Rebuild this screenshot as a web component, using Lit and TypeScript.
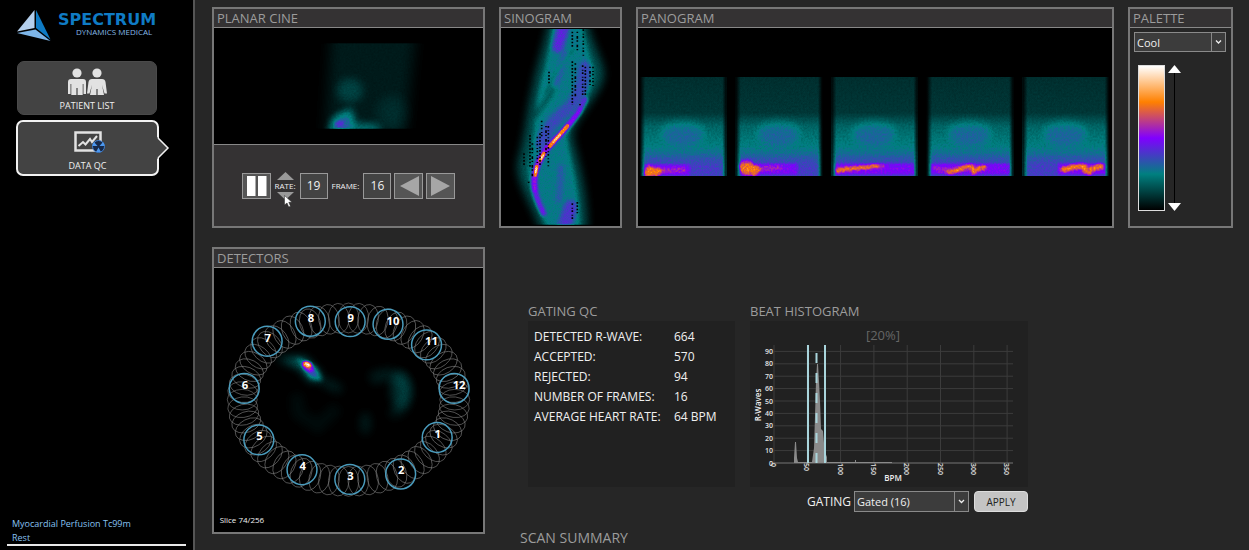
import { LitElement, html, css, svg } from "lit";
import { customElement } from "lit/decorators.js";

const VALUES = [
  ["DETECTED R-WAVE:", "664"],
  ["ACCEPTED:", "570"],
  ["REJECTED:", "94"],
  ["NUMBER OF FRAMES:", "16"],
  ["AVERAGE HEART RATE:", "64 BPM"],
];

// Detector head centres: x, y, label
const DETECTORS: [number, number, string][] = [
  [699, 593, "1"], [589, 703, "2"], [436, 719, "3"], [292, 690, "4"],
  [162, 600, "5"], [118, 445, "6"], [187, 303, "7"], [317, 243, "8"],
  [437, 244, "9"], [551, 252, "10"], [667, 314, "11"], [750, 445, "12"],
];

// Hot rows of each panogram projection: broad band, warm line, hottest line
const HOT: { band: string; warm: string; core: string; w: number }[] = [
  { band: "M3 93H50", warm: "M5 94L46 93", core: "M5 95l2 2l2-4l2 4l2-3l3 3l2-3l3 2", w: 6 },
  { band: "M3 92H62", warm: "M5 91L24 92L46 90", core: "M5 92l2-3l2 4l2-4l2 4l2-4l2 3l2 4l2-3l2 2", w: 7 },
  { band: "M3 92H84", warm: "M5 93L24 91L54 89", core: "M5 92l2 3l2-3l3 2l3-3l3 2l4-2l4 1l4-2l5 1l6-2l7 0", w: 3 },
  { band: "M3 92H84", warm: "M5 91L20 93L60 91", core: "M20 95l4 1l4-2l4-1l4-2l5-2l4 0l2 7l3-3l4-2l5-1", w: 4 },
  { band: "M36 92H84", warm: "M36 93L60 90L82 91", core: "M40 93l5-1l5-2l6-1l6 0l1 5l4 2l3-4l4-1l3-2l4 1", w: 5 },
];

// Sinogram dropout columns: x, top, bottom
const DROPS = [
  [247, 95, 140], [262, 95, 160], [280, 88, 170], [247, 184, 315], [256, 190, 290],
  [278, 196, 285], [286, 200, 285], [300, 200, 255], [309, 200, 260], [177, 215, 250],
  [270, 312, 325], [155, 362, 410], [120, 405, 500], [127, 430, 530], [142, 410, 490],
  [150, 400, 500], [168, 378, 470], [175, 378, 500], [102, 460, 500], [116, 545, 556],
  [247, 610, 665], [262, 606, 640],
];

@customElement("app-root")
export class AppRoot extends LitElement {
  static styles = css`
    :host { display: block; font-family: "Open Sans", "Noto Sans", sans-serif; font-size: 12px; color: #f0f0f0; }
    * { box-sizing: border-box; }
    button, input, select { font: inherit; color: inherit; margin: 0; padding: 0; }
    svg { display: block; }
    h2 { margin: 0; font-weight: 400; color: #9c9c9c; font-size: 13px; line-height: 18px; }
    .page { display: grid; grid-template-columns: 195px minmax(0, 1fr); height: 100vh; overflow: hidden; background: #262626; }
    .side { background: #000; border-right: 2px solid #555; padding: 8px 7px 4px; display: flex; flex-direction: column; }
    .brand { width: 172px; margin: 0 0 17px 5px; }
    .nav { display: flex; flex-direction: column; gap: 5px; padding-left: 10px; }
    .tab { display: flex; flex-direction: column; align-items: center; justify-content: flex-end; gap: 4px; height: 54px; border: 1px solid #4a4a4a; border-radius: 7px; background: #434343; font-size: 9px; line-height: 12px; padding-bottom: 2px; position: relative; width: 140px; }
    .tab.on { width: 143px; height: 56px; border: 2px solid #f2f2f2; margin-left: -1px; }
    .notch { position: absolute; left: 139px; top: 15px; }
    .study { margin-top: auto; color: #86c1f0; font-size: 9px; line-height: 12px; border-bottom: 2px solid #e8e8e8; padding-left: 5px; display: grid; gap: 2px; }
    .study p { margin: 0; }
    .main { padding: 7px 16px 0 17px; display: flex; flex-direction: column; gap: 20px; overflow: hidden; }
    .top { display: grid; grid-template-columns: 273px 123px minmax(0, 1fr) 105px; gap: 14px; height: 220px; flex: none; }
    .panel { border: 2px solid #777; display: flex; flex-direction: column; min-width: 0; }
    .panel h2 { background: #343233; border-bottom: 1px solid #888; padding-left: 3px; height: 19px; flex: none; }
    .view { background: #000; flex: 1; min-height: 0; }
    .view svg { width: 100%; height: 100%; }
    .controls { height: 82px; background: #343233; border-top: 1px solid #888; display: flex; align-items: center; justify-content: center; position: relative; font-size: 8px; }
    .key { width: 29px; height: 26px; border: 1px solid #999; background: #555; display: grid; place-items: center; }
    .rate { display: flex; flex-direction: column; align-items: center; margin: 0 4px; line-height: 12px; }
    .step { border: 0; background: none; display: block; }
    .num { width: 28px; height: 26px; border: 1px solid #999; background: #434343; text-align: center; font-size: 12px; }
    .frame { margin: 0 4px; }
    .gap { margin-left: 3px; }
    .cursor { position: absolute; left: 70px; top: 50px; }
    .tint { padding: 4px; flex: 1; }
    .pick { position: relative; height: 20px; display: flex; }
    .tint .pick { width: 92px; }
    .pick select { appearance: none; width: 100%; border: 1px solid #8a8a8a; border-radius: 0; background: #3c3c3c; padding-left: 2px; font-size: 11px; }
    .pick svg { position: absolute; right: 0; top: 0; pointer-events: none; }
    .scale { display: grid; grid-template-columns: 27px 13px; gap: 3px; padding: 13px 0 0 4px; }
    .ramp { height: 146px; border: 1px solid #ddd; background: linear-gradient(#fff, #ff8000 25%, #8000ff 50%, #008080 75%, #000); }
    .levels { display: grid; background: linear-gradient(#000, #000) center / 1px 100% no-repeat; }
    .levels input { grid-area: 1 / 1; appearance: none; background: none; writing-mode: vertical-lr; direction: rtl; width: 13px; height: 146px; pointer-events: none; }
    .levels input::-webkit-slider-thumb { appearance: none; pointer-events: auto; width: 13px; height: 8px; background: #fff; clip-path: polygon(50% 0, 100% 100%, 0 100%); }
    .levels .low::-webkit-slider-thumb { clip-path: polygon(0 0, 100% 0, 50% 100%); }
    .lower { display: grid; grid-template-columns: 273px 207px 278px; column-gap: 0; flex: none; }
    .detectors { height: 287px; }
    .gating { margin: 55px 0 0 43px; width: 207px; }
    .beat { margin: 55px 0 0 58px; width: 278px; }
    .card { background: #212121; margin-top: 1px; height: 166px; }
    .stats { border-collapse: collapse; }
    .stats th, .stats td { font-weight: 400; text-align: left; padding: 0; height: 20px; line-height: 20px; white-space: nowrap; }
    .stats th { width: 140px; }
    .statbox { padding: 6px 0 0 6px; }
    .apply { display: flex; align-items: center; justify-content: flex-end; gap: 3px; margin-top: 4px; font-size: 12px; }
    .apply .pick { width: 115px; height: 21px; }
    .go { width: 54px; height: 21px; border: 1px solid #ddd; border-radius: 4px; background: #c4c4c4; color: #222; font-size: 10px; margin-left: 2px; }
    .foot { padding-left: 308px; margin-top: -25px; font-size: 14px; }
  `;

  arrow = (h: number) => html`<svg width="15" height=${h} viewBox="0 0 15 20" aria-hidden="true">
    <path d="M.5 0V20" stroke="#8a8a8a" /><path d="M5 8.500l2.500 2.500l2.500-2.500" fill="none" stroke="#eee" stroke-width="1.300" /></svg>`;

  // Greyscale intensity goes in, the "Cool" palette comes out
  defs = svg`<defs>
    <filter id="cool" x="0" y="0" width="100%" height="100%" color-interpolation-filters="sRGB">
      <feTurbulence type="fractalNoise" baseFrequency=".5" numOctaves="2" seed="4" result="t" />
      <feColorMatrix in="t" values="1 0 0 0 0 1 0 0 0 0 1 0 0 0 0 0 0 0 0 1" result="n" />
      <feComposite in="SourceGraphic" in2="n" operator="arithmetic" k1=".36" k2=".82" />
      <feComponentTransfer>
        <feFuncR type="table" tableValues="0 0 .5 1 1" /><feFuncG type="table" tableValues="0 .5 0 .5 1" /><feFuncB type="table" tableValues="0 .5 1 0 1" />
      </feComponentTransfer>
    </filter>
    <filter id="b1" filterUnits="userSpaceOnUse" x="-20" y="-20" width="900" height="900" color-interpolation-filters="sRGB"><feGaussianBlur stdDeviation="1" /></filter>
    <filter id="b4" filterUnits="userSpaceOnUse" x="-20" y="-20" width="900" height="900" color-interpolation-filters="sRGB"><feGaussianBlur stdDeviation="4" /></filter>
    <filter id="b7" filterUnits="userSpaceOnUse" x="0" y="0" width="900" height="900" color-interpolation-filters="sRGB"><feGaussianBlur stdDeviation="7" /></filter>
    <filter id="b12" filterUnits="userSpaceOnUse" x="0" y="0" width="900" height="900" color-interpolation-filters="sRGB"><feGaussianBlur stdDeviation="14" /></filter>
  </defs>`;

  cine() {
    return html`<svg viewBox="0 0 269 115" preserveAspectRatio="none" role="img" aria-label="Planar cine">
      ${this.defs}
      <defs><clipPath id="cc"><rect x="90" y="15" width="130" height="85" /></clipPath></defs>
      <g filter="url(#cool)"><rect width="269" height="115" />
        <g clip-path="url(#cc)" fill="#fff">
          <path d="M118 0H202L190 120H110Z" opacity=".05" filter="url(#b7)" />
          <ellipse cx="136" cy="62" rx="13" ry="12" opacity=".08" filter="url(#b4)" />
          <ellipse cx="178" cy="84" rx="16" ry="18" opacity=".04" filter="url(#b7)" />
          <path d="M115 106L118 90L138 79L141 95L165 96V106Z" opacity=".2" filter="url(#b4)" />
          <path d="M115 106L121 89L136 82L138 106Z" opacity=".12" filter="url(#b4)" />
          <ellipse cx="125" cy="95" rx="5" ry="3.500" opacity=".12" filter="url(#b1)" />
        </g></g></svg>`;
  }

  sino() {
    return html`<svg viewBox="33 84 357 594" preserveAspectRatio="none" role="img" aria-label="Sinogram">
      <defs><clipPath id="sc"><rect x="33" y="87" width="357" height="587" /></clipPath></defs>
      <g filter="url(#cool)"><rect x="33" y="84" width="357" height="594" />
        <g clip-path="url(#sc)" fill="none" stroke="#fff" stroke-linecap="round">
          <path d="M182 50H285C310 150 345 190 340 230C325 290 265 340 245 400C255 470 296 560 290 720H165C125 600 82 560 84 490C110 400 112 330 128 270C143 190 160 150 182 50Z" fill="#fff" stroke="none" opacity=".16" filter="url(#b12)" />
          <path d="M190 50H275C285 150 315 190 310 240C300 300 245 360 232 410C235 470 275 560 270 720H190C140 620 115 560 115 500C140 400 134 330 148 270C170 190 180 150 190 50Z" fill="#fff" stroke="none" opacity=".12" filter="url(#b7)" />
          <path d="M220 80L204 140" stroke-width="34" opacity=".22" filter="url(#b7)" />
          <path d="M225 160C215 200 210 230 195 260" stroke-width="18" opacity=".09" filter="url(#b7)" />
          <path d="M284 200C278 260 265 300 230 330C195 355 175 380 155 430" stroke-width="36" opacity=".13" filter="url(#b7)" />
          <path d="M190 265C170 310 150 320 140 345" stroke="#000" stroke-width="18" opacity=".35" filter="url(#b7)" />
          <path d="M250 150C215 190 190 230 165 280" stroke="#000" stroke-width="8" opacity=".22" filter="url(#b4)" />
          <path d="M286 300C262 360 190 420 165 455C135 500 125 530 135 575C140 600 150 620 160 640" stroke-width="17" opacity=".27" filter="url(#b4)" />
          <path d="M272 330C240 380 190 420 160 458C138 495 132 530 135 570" stroke-width="12" opacity=".2" filter="url(#b4)" />
          <path d="M232 378L180 438M162 460L150 482M140 500L136 525" stroke-width="11" opacity=".45" filter="url(#b1)" />
          <path d="M210 404L190 426M160 466L154 476M139 504L137 516" stroke-width="6" opacity=".55" filter="url(#b1)" />
          <path d="M212 500C210 530 215 560 205 600" stroke-width="16" opacity=".1" filter="url(#b7)" />
          <path d="M242 620L220 690" stroke-width="40" opacity=".18" filter="url(#b7)" />
        </g></g>
      ${DROPS.map(([x, a, b], i) => svg`<path d="M${x} ${a}V${b}" stroke="#000" stroke-width="5" stroke-dasharray=${["5 5", "4 9 8 5", "5 8 3 5"][i % 3]} />`)}
    </svg>`;
  }

  pano() {
    return html`<svg viewBox="0 0 476 198" preserveAspectRatio="none" role="img" aria-label="Panogram">
      <defs>
        <linearGradient id="pv" x2="0" y2="1"><stop offset="0" stop-color="#171717" /><stop offset=".36" stop-color="#1b1b1b" /><stop offset=".5" stop-color="#323232" /><stop offset=".7" stop-color="#404040" /><stop offset=".82" stop-color="#505050" /><stop offset="1" stop-color="#5a5a5a" /></linearGradient>
        <linearGradient id="pe"><stop offset="0" /><stop offset=".06" stop-opacity="0" /><stop offset=".95" stop-opacity="0" /><stop offset="1" /></linearGradient>
        <clipPath id="pc"><rect width="87" height="99" /></clipPath>
      </defs>
      <g filter="url(#cool)"><rect width="476" height="198" />
        ${HOT.map((t, i) => svg`<g transform="translate(${2 + i * 96} 49)"><g clip-path="url(#pc)" fill="none" stroke="#fff">
          <rect width="87" height="99" fill="url(#pv)" stroke="none" />
          <ellipse cx="43" cy="56" rx="22" ry="12" fill="#fff" stroke="none" opacity=".1" filter="url(#b4)" />
          <path d="M6 82H82V99H6Z" fill="#fff" stroke="none" opacity=".07" filter="url(#b4)" />
          <path d=${t.band} stroke-width="11" opacity=".18" filter="url(#b1)" />
          <path d=${t.warm} stroke-width="5" opacity=".14" filter="url(#b1)" />
          <path d=${t.core} stroke-width=${t.w} opacity=".42" filter="url(#b1)" />
          <rect width="87" height="99" fill="url(#pe)" stroke="none" />
        </g></g>`)}
      </g></svg>`;
  }

  heads() {
    const count = 68;
    const rings = Array.from({ length: count }, (_, i) => {
      const a = (i / count) * 2 * Math.PI;
      const c = Math.cos(a), s = Math.sin(a);
      const x = 432 + 320 * c, y = 479 + 246 * s;
      const turn = (Math.atan2(s / 246, c / 320) * 180) / Math.PI;
      return svg`<ellipse cx=${x} cy=${y} rx="45" ry="31" transform="rotate(${turn} ${x} ${y})" />`;
    });
    return html`<svg viewBox="27 84 810 792" role="img" aria-label="Detector positions">
      <g filter="url(#cool)"><rect x="27" y="84" width="810" height="792" />
        <g fill="#fff">
          <path d="M215 355L300 352L350 405L340 425L315 420L285 382Z" opacity=".2" filter="url(#b12)" />
          <path d="M290 365L330 385L345 415L320 410Z" stroke="#fff" stroke-width="10" opacity=".22" filter="url(#b7)" />
          <ellipse cx="310" cy="380" rx="20" ry="13" transform="rotate(40 310 380)" opacity=".32" filter="url(#b4)" />
          <ellipse cx="308" cy="373" rx="13" ry="8" transform="rotate(20 308 373)" opacity=".95" filter="url(#b4)" />
          <path d="M350 420L410 450" stroke="#fff" stroke-width="26" opacity=".06" filter="url(#b12)" />
          <path d="M500 420C560 380 620 420 605 470C600 500 580 520 560 510" fill="none" stroke="#fff" stroke-width="36" opacity=".05" filter="url(#b12)" />
          <ellipse cx="588" cy="450" rx="30" ry="55" opacity=".08" filter="url(#b12)" />
          <path d="M275 460L280 520L340 560L400 500" fill="none" stroke="#fff" stroke-width="40" opacity=".02" filter="url(#b12)" />
          <ellipse cx="483" cy="550" rx="16" ry="34" opacity=".05" filter="url(#b12)" />
        </g></g>
      <g fill="none" stroke="#7c7c7c" stroke-width="1.800">${rings}</g>
      ${DETECTORS.map(([x, y, n]) => svg`<circle cx=${x} cy=${y} r="45" fill="none" stroke="#4a9cbd" stroke-width="4.500" />
        <text x=${x + (n.length > 1 ? 15 : 2)} y=${y + 1} text-anchor="middle" font-size="34" font-weight="700" fill="#fff">${n}</text>`)}
      <text x="44" y="851" font-size="24" fill="#f0f0f0">Slice 74/256</text>
    </svg>`;
  }

  chart() {
    return html`<svg width="100%" height="166" viewBox="0 0 278 166" role="img" aria-label="R-Waves by BPM">
      <text x="133" y="19" text-anchor="middle" font-size="13" fill="#666">[20%]</text>
      <g stroke="#3c3c3c">
        ${[1, 2, 3, 4, 5, 6, 7, 8, 9].map((n) => svg`<path d="M24 ${142 - n * 12.4}H263" />`)}
        ${[0, 1, 2, 3, 4, 5, 6, 7].map((n) => svg`<path d="M${24 + n * 33.3} 24V142" />`)}
      </g>
      <path d="M23 142H263" stroke="#777" />
      <path d="M44 142V137L45 121L46 121L47 137L48 141H62L64 127L65 95L66 60L67 43L68 43L69 60L70 80L71 108L73 110L74 122L75 131L77 136V141H105V139H106V141H142V142Z" fill="#8a8a8a" />
      <path d="M58 24V142M75 24V142" stroke="#a9d5dc" stroke-width="2" />
      <path d="M66.500 32V142" stroke="#a9d5dc" stroke-width="2" stroke-dasharray="10 10" />
      <g font-size="7" font-weight="600" fill="#e4e4e4">
        ${[0, 10, 20, 30, 40, 50, 60, 70, 80, 90].map((n) => svg`<text x="23" y=${144.5 - n * 1.24} text-anchor="end">${n}</text>`)}
        ${[0, 50, 100, 150, 200, 250, 300, 350].map((n) => svg`<text transform="translate(${21 + n * 0.667} 142) rotate(90)">${n}</text>`)}
      </g>
      <g font-size="8" fill="#eee" font-weight="600"><text x="143" y="160" text-anchor="middle">BPM</text>
        <text transform="translate(11 84) rotate(-90)" text-anchor="middle">R-Waves</text></g>
    </svg>`;
  }

  render() {
    return html`<div class="page">
      <aside class="side">
        <svg class="brand" height="36" viewBox="0 0 172 36" role="img" aria-label="Spectrum Dynamics Medical">
          <path d="M22.500 2L5 23.500L22.500 20Z" fill="#b4cfec" /><path d="M24 2V20L38.500 31.500Z" fill="#0f7bc4" /><path d="M5 25L23.500 21.500L38.500 33Z" fill="#7db5e8" />
          <text x="46" y="17" font-size="16" font-weight="700" font-family="DejaVu Sans, sans-serif" fill="#0f7bc4">SPECTRUM</text>
          <text x="64" y="27" font-size="8" fill="#86b9e6">DYNAMICS MEDICAL</text>
        </svg>
        <nav class="nav">
          <button class="tab">
            <svg width="40" height="28" viewBox="0 0 40 28" fill="#e2e2e2" aria-hidden="true"><circle cx="10" cy="5" r="4.600" /><circle cx="30" cy="5" r="4.600" />
              <path d="M4 11H16Q19 11 19 14V26H16.500V16H15.700V27H10.600V20H9.400V27H4.300V16H3.500V26H1V14Q1 11 4 11Z" />
              <path d="M25 11H35Q38 11 38.500 14L40 25.500H37.500L35 17L37 27H30.600V21H29.400V27H23L25 17L22.500 25.500H20L21.500 14Q22 11 25 11Z" /></svg>
            <span>PATIENT LIST</span></button>
          <button class="tab on">
            <svg width="34" height="25" viewBox="-3 0 34 25" aria-hidden="true"><rect x="1.500" y="1.500" width="25" height="18" fill="none" stroke="#e2e2e2" stroke-width="2.500" /><path d="M4.500 15L9 11L11.500 13.500L16 8L18 11L23 5" fill="none" stroke="#e2e2e2" stroke-width="2" />
              <circle cx="24.500" cy="15.500" r="6" fill="#16294a" stroke="#3f7fd0" /><path d="M23.500 15L20 11A6 6 0 0 0 18.500 15ZM25.500 15L29 11A6 6 0 0 1 30.500 15ZM24.500 16.500L22 21H27Z" fill="#4c97ee" /></svg>
            <span>DATA QC</span>
            <svg class="notch" width="13" height="22" viewBox="0 0 13 22" aria-hidden="true"><path d="M0 0L11 11L0 22Z" fill="#434343" /><path d="M1 1L11 11L1 21" fill="none" stroke="#f2f2f2" stroke-width="1.500" /></svg>
          </button>
        </nav>
        <div class="study"><p>Myocardial Perfusion Tc99m</p><p>Rest</p></div>
      </aside>
      <main class="main">
        <div class="top">
          <section class="panel"><h2>PLANAR CINE</h2><div class="view">${this.cine()}</div>
            <div class="controls">
              <button class="key" aria-label="Pause"><svg width="23" height="22" viewBox="0 0 23 22"><path d="M2 1h8.500v20H2zM13 1h8.500v20h-8.500z" fill="#fff" /></svg></button>
              <div class="rate">
                <button class="step" aria-label="Faster"><svg width="17" height="8" viewBox="0 0 17 8"><path d="M8.500 0L17 8H0Z" fill="#999" /></svg></button>
                <label for="rate">RATE:</label>
                <button class="step" aria-label="Slower"><svg width="17" height="8" viewBox="0 0 17 8"><path d="M0 0H17L8.500 8Z" fill="#999" /></svg></button>
              </div>
              <input id="rate" class="num" .value=${"19"} /><label class="frame" for="frame">FRAME:</label><input id="frame" class="num" .value=${"16"} />
              <button class="key gap" aria-label="Previous frame"><svg width="24" height="20" viewBox="0 0 24 20"><path d="M22 0V20L3 10Z" fill="#a6a6a6" /></svg></button>
              <button class="key gap" aria-label="Next frame"><svg width="24" height="20" viewBox="0 0 24 20"><path d="M2 0V20L21 10Z" fill="#a6a6a6" /></svg></button>
              <svg class="cursor" width="9" height="13" viewBox="0 0 9 13"><path d="M.5.500V10L3 8L4.700 12L6.500 11.200L4.800 7.300H8Z" fill="#fff" stroke="#222" stroke-width=".5" /></svg>
            </div></section>
          <section class="panel"><h2>SINOGRAM</h2><div class="view">${this.sino()}</div></section>
          <section class="panel"><h2>PANOGRAM</h2><div class="view">${this.pano()}</div></section>
          <section class="panel"><h2>PALETTE</h2><div class="tint">
            <div class="pick"><select aria-label="Palette"><option>Cool</option></select>${this.arrow(20)}</div>
            <div class="scale"><div class="ramp"></div><div class="levels">
              <input type="range" aria-label="Upper level" .value=${"100"} /><input class="low" type="range" aria-label="Lower level" .value=${"0"} /></div></div>
          </div></section>
        </div>
        <div class="lower">
          <section class="panel detectors"><h2>DETECTORS</h2><div class="view">${this.heads()}</div></section>
          <section class="gating"><h2>GATING QC</h2><div class="card statbox"><table class="stats">${VALUES.map(([k, v]) => html`<tr><th scope="row">${k}</th><td>${v}</td></tr>`)}</table></div></section>
          <section class="beat"><h2>BEAT HISTOGRAM</h2><div class="card">${this.chart()}</div>
            <div class="apply"><label for="gate">GATING</label><div class="pick"><select id="gate"><option>Gated (16)</option></select>${this.arrow(21)}</div><button class="go">APPLY</button></div></section>
        </div>
        <h2 class="foot">SCAN SUMMARY</h2>
      </main>
    </div>`;
  }
}
